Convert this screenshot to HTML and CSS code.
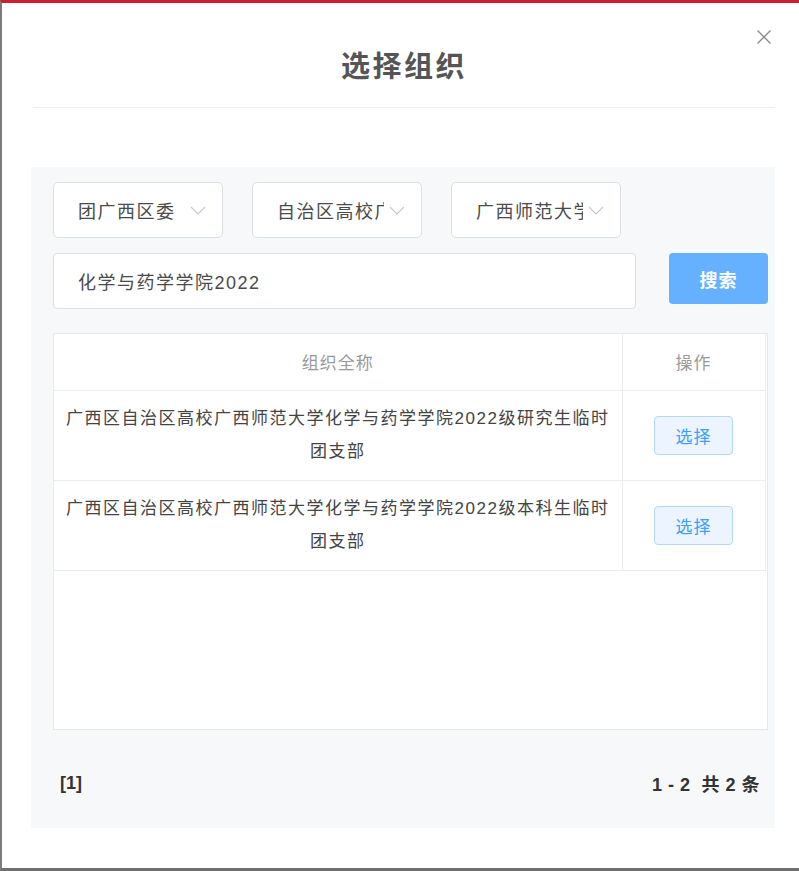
FILE: index.html
```html
<!DOCTYPE html>
<html lang="zh-CN">
<head>
  <meta charset="UTF-8" />
  <meta name="viewport" content="width=device-width, initial-scale=1.0" />
  <title>选择组织</title>
  <link rel="stylesheet" href="styles.css">
</head>
<body>
  <div class="page">
    <div class="modal-head">
      <h2>选择组织</h2>
    </div>
    <button class="close-btn" aria-label="关闭">
      <svg width="16" height="16" viewBox="0 0 16 16"><path d="M1.5 1.5 L14.5 14.5 M14.5 1.5 L1.5 14.5" stroke="#8a8a8a" stroke-width="1.3" fill="none"/></svg>
    </button>

    <div class="panel">
      <div class="select-row">
        <div class="select-box">
          <span class="select-text">团广西区委</span>
          <svg class="chevron" width="16" height="9" viewBox="0 0 16 9"><path d="M1 1 L8 8 L15 1" stroke="#c6c8cc" stroke-width="1.1" fill="none"/></svg>
        </div>
        <div class="select-box">
          <span class="select-text">自治区高校广西</span>
          <svg class="chevron" width="16" height="9" viewBox="0 0 16 9"><path d="M1 1 L8 8 L15 1" stroke="#c6c8cc" stroke-width="1.1" fill="none"/></svg>
        </div>
        <div class="select-box">
          <span class="select-text">广西师范大学</span>
          <svg class="chevron" width="16" height="9" viewBox="0 0 16 9"><path d="M1 1 L8 8 L15 1" stroke="#c6c8cc" stroke-width="1.1" fill="none"/></svg>
        </div>
      </div>

      <div class="search-row">
        <div class="search-input">化学与药学学院2022</div>
        <button class="search-btn">搜索</button>
      </div>

      <div class="table-box">
        <table>
          <thead>
            <tr>
              <th class="col-name">组织全称</th>
              <th class="col-op">操作</th>
            </tr>
          </thead>
          <tbody>
            <tr>
              <td class="col-name">广西区自治区高校广西师范大学化学与药学学院2022级研究生临时团支部</td>
              <td class="col-op"><button class="pick-btn">选择</button></td>
            </tr>
            <tr>
              <td class="col-name">广西区自治区高校广西师范大学化学与药学学院2022级本科生临时团支部</td>
              <td class="col-op"><button class="pick-btn">选择</button></td>
            </tr>
          </tbody>
        </table>
      </div>

      <div class="pager">
        <span>[1]</span>
        <span class="total">1 - 2&nbsp; 共 2 条</span>
      </div>
    </div>
  </div>
</body>
</html>
```
FILE: styles.css
```css
* { box-sizing: border-box; margin: 0; padding: 0; }
html, body { background: #fff; font-family: "Liberation Sans", "Noto Sans CJK SC", sans-serif; }

.page {
  position: relative; height: 871px; overflow: hidden; background: #fff;
  border-top: 3px solid #cc1f31; border-left: 2px solid #7c7c7c; border-bottom: 3px solid #6f6f6f;
}

.modal-head {
  height: 105px; margin: 0 24px 0 31px; padding-top: 17px;
  display: flex; align-items: center; justify-content: center;
  border-bottom: 1px solid #eeeff1;
}
.modal-head h2 { font-size: 29px; font-weight: 700; color: #555; letter-spacing: 2.5px; }

.close-btn {
  position: absolute; top: 26px; right: 27px; width: 16px; height: 16px;
  background: none; border: none; display: flex;
}

.panel {
  height: 661px; margin: 59px 24px 0 29px;
  padding: 15px 7px 0 22px; background: #f7f8fa;
}

.select-row { display: flex; gap: 29px; }
.select-box {
  width: 170px; height: 56px; padding: 0 16px 0 24px;
  display: flex; align-items: center; justify-content: space-between;
  background: #fff; border: 1px solid #dcdfe4; border-radius: 5px;
}
.select-text {
  width: 107px; overflow: hidden; white-space: nowrap;
  font-size: 18px; letter-spacing: 1.5px; color: #4a4a4a;
}
.chevron { flex: none; }

.search-row { display: flex; align-items: flex-start; gap: 33px; margin-top: 15px; }
.search-input {
  width: 583px; height: 56px; padding-left: 24px;
  display: flex; align-items: center;
  background: #fff; border: 1px solid #dcdfe4; border-radius: 4px;
  font-size: 18px; letter-spacing: 1.5px; color: #4a4a4a;
}
.search-btn {
  width: 99px; height: 51px; border: none; border-radius: 4px;
  background: #66b1ff; color: #fff; font-size: 18px; font-weight: 700; letter-spacing: 1px;
  font-family: inherit;
}

.table-box {
  height: 397px; margin-top: 24px;
  background: #fff; border: 1px solid #e6e8eb;
}
table { width: 711px; border-collapse: collapse; table-layout: fixed; }
th, td { text-align: center; border-bottom: 1px solid #ebedf0; border-right: 1px solid #ebedf0; }
th { height: 56px; font-size: 17px; font-weight: 400; color: #999; letter-spacing: 1px; }
td { height: 90px; font-size: 17px; color: #444; line-height: 33px; letter-spacing: 1.5px; }
.col-name { width: 568px; padding: 0 4px; }
.col-op { width: 143px; }
.pick-btn {
  width: 79px; height: 39px; border: 1px solid #b3d8ff; border-radius: 4px;
  background: #ecf5ff; color: #409eff; font-size: 17px; letter-spacing: 1px;
  font-family: inherit;
}

.pager {
  display: flex; justify-content: space-between; align-items: center;
  height: 106px; padding: 0 8px 0 7px;
  font-size: 18px; font-weight: 700; color: #333;
}
.total { letter-spacing: 0.5px; }
```
